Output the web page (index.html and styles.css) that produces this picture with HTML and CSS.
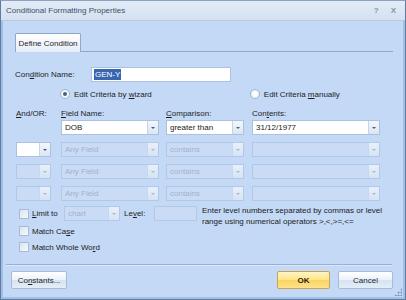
FILE: index.html
```html
<!DOCTYPE html>
<html>
<head>
<meta charset="utf-8">
<link rel="stylesheet" href="styles.css">
</head>
<body>
<div class="window">
  <div class="titlebar">
    <span class="title">Conditional Formatting Properties</span>
    <span class="tbtns"><span class="help">?</span><span class="close">X</span></span>
  </div>
  <div class="body">
    <div class="tabs"><div class="tab">Define Condition</div><div class="tabline"></div></div>
    <div class="page">
      <div class="namerow">
        <span class="lbl namelbl">Con<u>d</u>ition Name:</span>
        <div class="textbox"><span class="sel">GEN-Y</span></div>
      </div>
      <div class="radios">
        <label class="radio r1"><span class="rb checked"></span><span>Edit Criteria by <u>w</u>izard</span></label>
        <label class="radio r2"><span class="rb"></span><span>Edit Criteria <u>m</u>anually</span></label>
      </div>
      <div class="grid">
        <span class="lbl"><u>A</u>nd/OR:</span>
        <span class="lbl"><u>F</u>ield Name:</span>
        <span class="lbl"><u>C</u>omparison:</span>
        <span class="lbl">Con<u>t</u>ents:</span>

        <span></span>
        <div class="combo w97"><span class="val">DOB</span><span class="arrow"></span></div>
        <div class="combo w77"><span class="val">greater than</span><span class="arrow"></span></div>
        <div class="combo w127"><span class="val">31/12/1977</span><span class="arrow"></span></div>

        <div class="combo w34 halfdis"><span class="val"></span><span class="arrow"></span></div>
        <div class="combo w97 dis"><span class="val">Any Field</span><span class="arrow"></span></div>
        <div class="combo w77 dis"><span class="val">contains</span><span class="arrow"></span></div>
        <div class="combo w127 dis"><span class="val"></span><span class="arrow"></span></div>

        <div class="combo w34 dis"><span class="val"></span><span class="arrow"></span></div>
        <div class="combo w97 dis"><span class="val">Any Field</span><span class="arrow"></span></div>
        <div class="combo w77 dis"><span class="val">contains</span><span class="arrow"></span></div>
        <div class="combo w127 dis"><span class="val"></span><span class="arrow"></span></div>

        <div class="combo w34 dis"><span class="val"></span><span class="arrow"></span></div>
        <div class="combo w97 dis"><span class="val">Any Field</span><span class="arrow"></span></div>
        <div class="combo w77 dis"><span class="val">contains</span><span class="arrow"></span></div>
        <div class="combo w127 dis"><span class="val"></span><span class="arrow"></span></div>
      </div>
      <div class="options">
        <div class="limitrow">
          <label class="check"><span class="cb"></span><span><u>L</u>imit to</span></label>
          <div class="combo w56 dis"><span class="val">chart</span><span class="arrow"></span></div>
          <span class="lbl levlbl">Le<u>v</u>el:</span>
          <div class="levelbox"></div>
          <div class="hint">Enter level numbers separated by commas or level range using numerical operators &gt;,&lt;,&gt;=,&lt;=</div>
        </div>
        <label class="check"><span class="cb"></span><span>Match Ca<u>s</u>e</span></label>
        <label class="check"><span class="cb"></span><span>Match Whole Wo<u>r</u>d</span></label>
      </div>
    </div>
    <div class="sep"></div>
    <div class="buttons">
      <button class="btn const">Co<u>n</u>stants...</button>
      <span class="spacer"></span>
      <button class="btn ok">OK</button>
      <button class="btn cancel">Cancel</button>
    </div>
    <span class="grip"></span>
  </div>
</div>
</body>
</html>
```
FILE: styles.css
```css
* { box-sizing: border-box; }
html, body { margin: 0; padding: 0; }
body {
  width: 406px; height: 300px; overflow: hidden;
  font-family: "Liberation Sans", Arial, sans-serif;
  font-size: 8px; color: #1b1b1b;
  background: #c3d9f6;
}
u { text-decoration: underline; text-underline-offset: 1px; }
.window {
  width: 406px; height: 300px;
  border: 1px solid #5d7ca4;
  border-top-color: #8aa3c3;
  display: flex; flex-direction: column;
  background: #c3d9f6;
}
.titlebar {
  height: 20px;
  background: linear-gradient(#e3ebf6, #d5e1f0);
  border-bottom: 1px solid #b6c9e2;
  display: flex; align-items: center; justify-content: space-between;
  padding: 0 9px 0 5px;
  color: #3e4f6a;
}
.title { font-size: 8px; }
.tbtns { display: flex; gap: 12px; color: #8095b2; font-size: 8px; font-weight: bold; }
.body {
  flex: 1; position: relative;
  background: #c3d9f6;
  border-left: 2px solid #a3bfe3;
  border-right: 2px solid #a3bfe3;
  border-bottom: 2px solid #a3bfe3;
  display: flex; flex-direction: column;
}
.tabs { display: flex; align-items: flex-end; padding: 11px 0 0 12px; height: 31px; }
.tab {
  height: 19px; width: 66px; white-space: nowrap;
  background: linear-gradient(#ffffff, #e6eef9);
  border: 1px solid #8fa9c9; border-bottom: none;
  border-radius: 2px 2px 0 0;
  display: flex; align-items: center; justify-content: center;
  color: #1e1e1e;
}
.tabline { flex: none; width: 312px; border-bottom: 1px solid #8fa9c9; }
.page { padding: 15px 0 0 12px; }
.lbl { color: #1e1e1e; white-space: nowrap; }
.namerow { display: flex; align-items: center; height: 15px; }
.namelbl { width: 76px; }
.textbox {
  width: 140px; height: 15px; background: #fff;
  border: 1px solid #abc1de; padding: 1px 2px;
  display: flex; align-items: center;
}
.sel { background: #3a66b0; color: #fff; padding: 0 1px; line-height: 11px; }
.radios { display: flex; height: 22px; align-items: center; padding-top: 2px; }
.radio { display: flex; align-items: center; gap: 4px; white-space: nowrap; }
.r1 { margin-left: 45px; }
.r2 { margin-left: 98px; }
.rb {
  width: 10px; height: 10px; border-radius: 50%;
  border: 1px solid #a0b6d2;
  background: radial-gradient(circle, #ffffff 30%, #dbe6f4 100%);
  position: relative;
}
.rb.checked::after {
  content: ""; position: absolute; left: 2px; top: 2px;
  width: 4px; height: 4px; border-radius: 50%; background: #4a5f80;
}
.grid {
  display: grid;
  grid-template-columns: 45px 105px 86px 128px;
  grid-auto-rows: 22px;
  grid-template-rows: 13px;
  align-items: start;
  margin-top: 3px;
  margin-left: 1px;
}
.grid > .lbl { align-self: center; }
.combo {
  height: 15px; display: flex;
  background: #fff; border: 1px solid #abc1de;
}
.combo .val { flex: 1; padding: 0 3px; display: flex; align-items: center; white-space: nowrap; overflow: hidden; }
.combo .arrow {
  width: 11px; border-left: 1px solid #c5d5ea;
  background: linear-gradient(#f4f7fc, #dbe5f3);
  position: relative;
}
.combo .arrow::after {
  content: ""; position: absolute; left: 3px; top: 6px;
  border-left: 2px solid transparent; border-right: 2px solid transparent;
  border-top: 2px solid #4b5d78;
}
.w34 { width: 35px; }
.w56 { width: 56px; }
.w97 { width: 98px; }
.w77 { width: 78px; }
.w127 { width: 128px; }
.combo.dis { background: #cadcf5; border-color: #b2c8e6; color: #9fb2cb; }
.combo.dis .arrow { background: linear-gradient(#e9f0fa, #d6e3f4); border-left-color: #c7d7ec; }
.combo.dis .arrow::after { border-top-color: #a9b9cf; }
.combo.halfdis .val { background: #fff; }
.combo.halfdis { background: #fff; }
.options { margin-top: -2px; display: flex; flex-direction: column; }
.limitrow { display: flex; align-items: flex-start; height: 17px; }
.check { display: flex; align-items: center; gap: 3px; height: 16px; margin-left: 4px; white-space: nowrap; }
.limitrow .check { width: 45px; height: 15px; }
.cb {
  width: 10px; height: 10px; border: 1px solid #a6bad4;
  background: linear-gradient(135deg, #d8e3f1, #f7f9fc);
}
.levlbl { margin-left: 4px; width: 30px; line-height: 15px; }
.levelbox { width: 43px; height: 15px; border: 1px solid #b2c8e6; background: #cadcf5; }
.hint { margin-left: 5px; width: 190px; line-height: 11px; margin-top: -1px; }
.sep { margin: auto 11px 0 3px; border-top: 1px solid #99b1d1; border-bottom: 1px solid #dbe8f9; }
.buttons { display: flex; padding: 5px 10px 8px 8px; height: 31px; align-items: flex-start; }
.spacer { flex: 1; }
.btn {
  height: 18px; font: inherit; color: #1e1e1e;
  border: 1px solid #a9bcd6; border-radius: 2px;
  background: linear-gradient(#ffffff 0%, #eaf1fb 50%, #d6e3f4 51%, #e4edf9 100%);
  padding: 0;
}
.const { width: 56px; }
.ok {
  width: 53px; font-weight: bold; margin-right: 8px;
  border-color: #c3a458;
  background: linear-gradient(#fff4c4 0%, #ffe58a 50%, #fdd35c 51%, #fde38d 100%);
}
.cancel { width: 55px; }
.grip {
  position: absolute; right: 1px; bottom: 1px; width: 8px; height: 8px;
  background: radial-gradient(circle, #7c92b0 45%, transparent 50%) 0 0 / 3px 3px;
  clip-path: polygon(100% 0, 100% 100%, 0 100%);
}
```
